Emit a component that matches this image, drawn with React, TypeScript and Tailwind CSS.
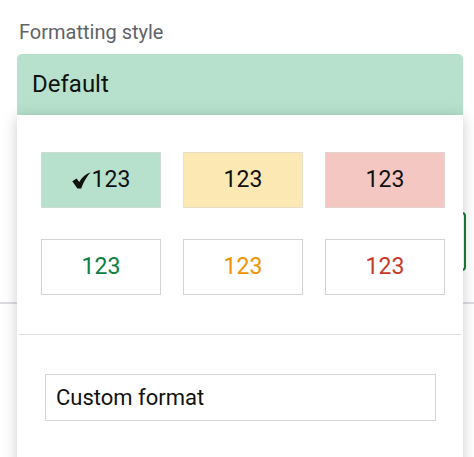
import React from "react";

const font = { fontFamily: "Roboto, 'Noto Sans', Arial, sans-serif" };

function Check() {
  return (
    <svg width="19" height="17" viewBox="0 0 19 17" className="mr-[1px] mt-[1px]">
      <path d="M0.3 9.2 L4.6 6.4 L7.2 10 C9.8 5.6 13.8 2 18.8 0.3 C15.6 3.6 12.2 8.6 9.2 16.6 L5.4 16.6 Z" fill="#111" />
    </svg>
  );
}

export default function App() {
  const filled = [
    { bg: "bg-[#b7e1cd]", check: true },
    { bg: "bg-[#fce8b2]" },
    { bg: "bg-[#f4c7c3]" },
  ];
  const outlined = [
    { color: "text-[#0b8043]" },
    { color: "text-[#f09300]" },
    { color: "text-[#c53929]" },
  ];
  return (
    <div className="relative w-[474px] h-[457px] overflow-hidden bg-white" style={font}>
      {/* underlying page */}
      <div className="pt-[20px] pl-[19px] text-[20px] leading-[24px] text-[#5f6368]">Formatting style</div>
      <div className="mt-[10px] ml-[17px] w-[446px] h-[62px] rounded-t-[5px] bg-[#b7e1cd] pt-[16px] pl-[15px] text-[24px] leading-[28px] text-[#111]">
        Default
      </div>
      <div className="absolute left-[300px] top-[212px] w-[166px] h-[59px] rounded-[4px] border-2 border-[#188038]" />
      <div className="absolute left-0 top-[302px] w-full h-[2px] bg-[#dadce0]" />

      {/* popup panel */}
      <div className="absolute left-[17px] top-[115px] w-[446px] h-[360px] bg-white shadow-[0_2px_14px_rgba(0,0,0,0.2)]">
        <div className="pt-[37px] pl-[24px] grid grid-cols-[120px_120px_120px] gap-x-[22px] gap-y-[31px]">
          {filled.map((s, i) => (
            <div
              key={i}
              className={`h-[56px] ${s.bg} border border-[#d8d8d8]/60 flex items-center justify-center text-[23px] text-[#111]`}
            >
              {s.check ? (
                <>
                  <Check />
                  <span>123</span>
                </>
              ) : (
                "123"
              )}
            </div>
          ))}
          {outlined.map((s, i) => (
            <div
              key={i}
              className={`h-[56px] bg-white border border-[#d3d3d3] flex items-center justify-center text-[23px] ${s.color}`}
            >
              123
            </div>
          ))}
        </div>
        <div className="mt-[39px] mx-[2px] h-[1px] bg-[#dcdcdc]" />
        <div className="mt-[39px] ml-[28px] w-[391px] h-[47px] border-[1.5px] border-[#d6d6d6] flex items-center pl-[10px] text-[22px] text-[#111]">
          Custom format
        </div>
      </div>
    </div>
  );
}
